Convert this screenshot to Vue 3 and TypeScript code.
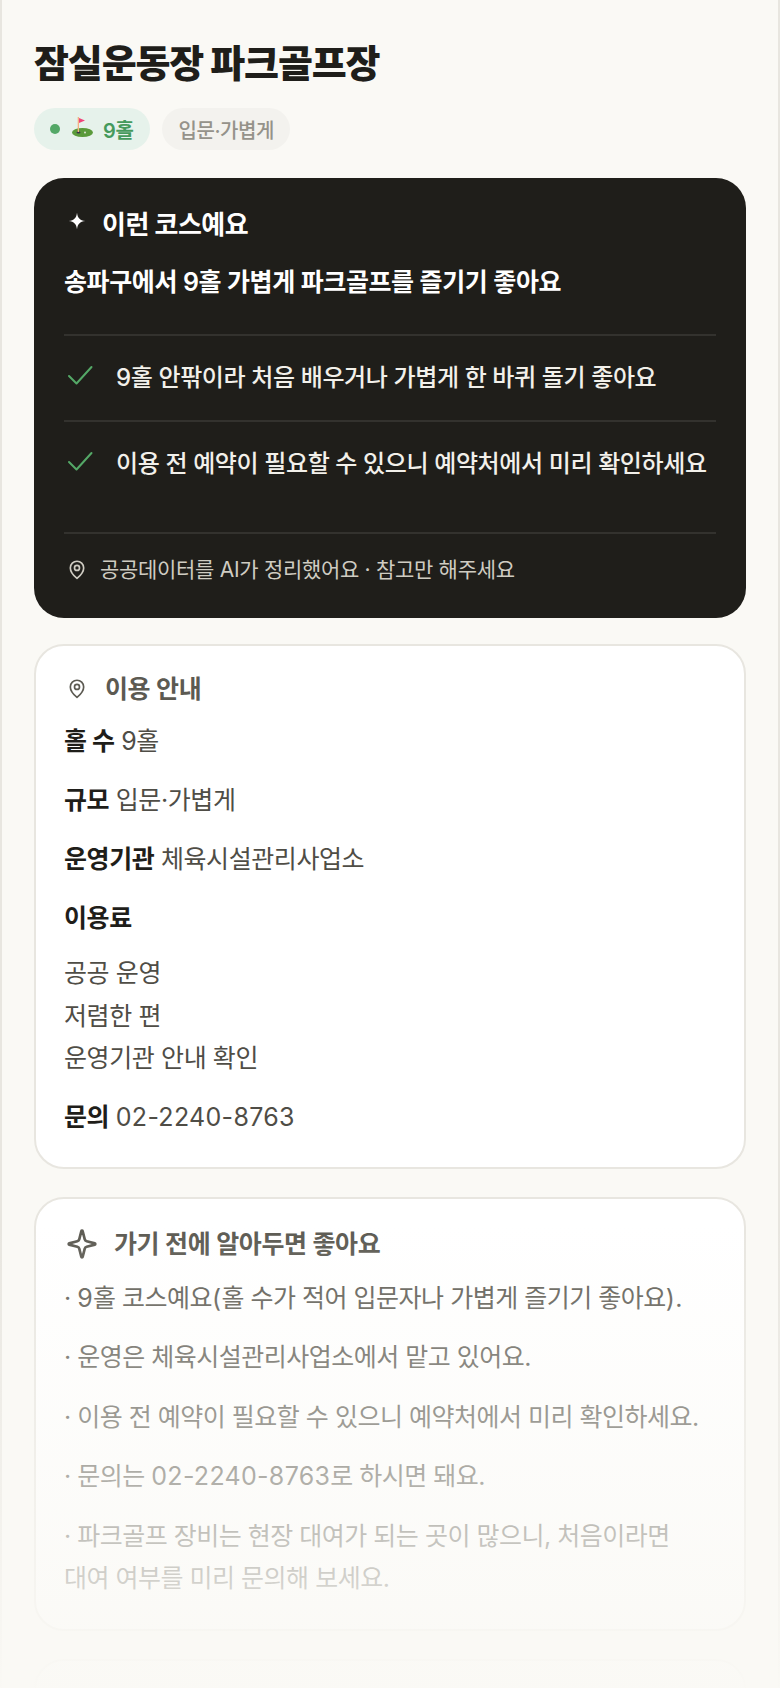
<script setup lang="ts">
const checks: string[] = [
  '9홀 안팎이라 처음 배우거나 가볍게 한 바퀴 돌기 좋아요',
  '이용 전 예약이 필요할 수 있으니 예약처에서 미리 확인하세요',
]

const tips: string[] = [
  '· 9홀 코스예요(홀 수가 적어 입문자나 가볍게 즐기기 좋아요).',
  '· 운영은 체육시설관리사업소에서 맡고 있어요.',
  '· 이용 전 예약이 필요할 수 있으니 예약처에서 미리 확인하세요.',
  '· 문의는 02-2240-8763로 하시면 돼요.',
  '· 파크골프 장비는 현장 대여가 되는 곳이 많으니, 처음이라면 대여 여부를 미리 문의해 보세요.',
]

// digits and punctuation sit a little wider than the hangul around them
const splitNums = (t: string): string[] => t.split(/([0-9().-]+)/)
</script>

<template>
  <div class="page">
    <h1 class="title">잠실운동장 파크골프장</h1>
    <div class="chips">
      <span class="chip chip-green">
        <i class="dot"></i>
        <svg class="golf" viewBox="0 0 24 24">
          <ellipse cx="11.500" cy="15.500" rx="10.500" ry="4.500" fill="#5a9a3a" />
          <ellipse cx="7.500" cy="15.500" rx="2" ry="1" fill="#3a3348" />
          <circle cx="14" cy="15.500" r="0.900" fill="#e8e8e0" />
          <rect x="6.700" y="0" width="1.300" height="15" fill="#f4b183" />
          <path d="M8 1 14 3.500 8 6z" fill="#f0457a" />
        </svg>
        <span>9홀</span>
      </span>
      <span class="chip chip-gray">입문·가볍게</span>
    </div>

    <section class="dark">
      <div class="dark-head">
        <svg class="spark" viewBox="0 0 24 24"><path d="M12 1c.8 7 3.800 10.200 11 11-7.200.8-10.200 4-11 11-.8-7-3.800-10.200-11-11 7.200-.8 10.200-4 11-11z" fill="#fff" /></svg>
        <h2>이런 코스예요</h2>
      </div>
      <p class="lead">송파구에서 9홀 가볍게 파크골프를 즐기기 좋아요</p>
      <ul class="checks">
        <li v-for="c in checks" :key="c">
          <svg class="check" viewBox="0 0 32 32"><path d="M5 17l7.500 7.500L27.500 8" fill="none" stroke="#54a867" stroke-width="2" stroke-linecap="round" stroke-linejoin="round" /></svg>
          <span>{{ c }}</span>
        </li>
      </ul>
      <div class="note">
        <svg class="pin" viewBox="0 0 24 24" fill="none" stroke="currentColor" stroke-width="2"><path d="M12 22s8-6.500 8-12.500a8 8 0 0 0-16 0C4 15.500 12 22 12 22z" stroke-linejoin="round" /><circle cx="12" cy="9.500" r="3" /></svg>
        <span>공공데이터를 AI가 정리했어요 · 참고만 해주세요</span>
      </div>
    </section>

    <section class="card info">
      <div class="card-head">
        <svg class="pin" viewBox="0 0 24 24" fill="none" stroke="currentColor" stroke-width="2"><path d="M12 22s8-6.500 8-12.500a8 8 0 0 0-16 0C4 15.500 12 22 12 22z" stroke-linejoin="round" /><circle cx="12" cy="9.500" r="3" /></svg>
        <h3>이용 안내</h3>
      </div>
      <p class="row first"><b>홀 수</b> 9홀</p>
      <p class="row"><b>규모</b> 입문·가볍게</p>
      <p class="row"><b>운영기관</b> 체육시설관리사업소</p>
      <p class="row"><b>이용료</b></p>
      <p class="fee">공공 운영<br />저렴한 편<br />운영기관 안내 확인</p>
      <p class="row"><b>문의</b> <span class="num">02-2240-8763</span></p>
    </section>

    <section class="card tips">
      <div class="card-head">
        <svg class="star" viewBox="0 0 24 24" fill="none" stroke="currentColor" stroke-width="2" stroke-linecap="round" stroke-linejoin="round"><path d="M9.937 15.500A2 2 0 0 0 8.500 14.063l-6.135-1.582a.5.5 0 0 1 0-.962L8.500 9.936A2 2 0 0 0 9.937 8.500l1.582-6.135a.5.5 0 0 1 .963 0L14.063 8.500A2 2 0 0 0 15.500 9.937l6.135 1.581a.5.5 0 0 1 0 .964L15.500 14.063a2 2 0 0 0-1.437 1.437l-1.582 6.135a.5.5 0 0 1-.963 0z" /></svg>
        <h3>가기 전에 알아두면 좋아요</h3>
      </div>
      <p v-for="t in tips" :key="t" class="tip">
        <span v-for="(part, i) in splitNums(t)" :key="i" :class="{ num: i % 2 === 1 }">{{ part }}</span>
      </p>
    </section>

    <section class="card next"></section>

    <div class="fade"></div>
  </div>
</template>

<style>
body {
  background: #faf9f5;
}
</style>

<style scoped>
.page {
  position: relative;
  box-sizing: border-box;
  height: 1688px;
  overflow: hidden;
  padding: 37px 34px 0;
  background: #faf9f5;
  box-shadow: inset 2px 0 #e8e6e0, inset -2px 0 #e8e6e0;
  font-family: Inter, "Noto Sans CJK KR", sans-serif;
  color: #1f1e1a;
}
.title {
  margin: 0;
  font-size: 38px;
  line-height: 52px;
  font-weight: 800;
  letter-spacing: -1.14px;
}
.chips {
  display: flex;
  gap: 12px;
  margin-top: 19px;
}
.chip {
  display: inline-flex;
  align-items: center;
  height: 42px;
  padding: 0 16px;
  border-radius: 21px;
  font-size: 20px;
  letter-spacing: -0.4px;
  font-weight: 500;
}
.chip-green {
  padding-right: 17px;
  background: #e6f2eb;
  color: #459a5c;
  font-weight: 600;
}
.dot {
  width: 10px;
  height: 10px;
  border-radius: 50%;
  background: #54a867;
  margin-right: 11px;
}
.golf {
  width: 24px;
  height: 24px;
  margin-right: 8px;
}
.chip-gray {
  background: #f3f2ee;
  color: #95928a;
}
.dark {
  margin-top: 28px;
  background: #1f1e1a;
  border-radius: 30px;
  padding: 28px 30px 32px;
  color: #fff;
}
.dark-head {
  display: flex;
  align-items: center;
  gap: 16px;
}
.dark-head h2 {
  margin: 0;
  font-size: 26px;
  line-height: 38px;
  font-weight: 700;
  letter-spacing: -0.5px;
}
.spark {
  width: 18px;
  height: 18px;
  margin-left: 4px;
  margin-top: -8px;
}
.lead {
  margin: 20px 0 0;
  font-size: 25px;
  line-height: 36px;
  font-weight: 600;
  letter-spacing: -0.4px;
}
.checks {
  list-style: none;
  margin: 34px 0 0;
  padding: 0;
}
.checks li {
  display: flex;
  align-items: center;
  gap: 20px;
  height: 86px;
  border-top: 2px solid #33322e;
  box-sizing: border-box;
  padding-bottom: 6px;
  font-size: 24px;
  font-weight: 500;
  letter-spacing: -0.38px;
  color: #f2f0ea;
}
.check {
  width: 32px;
  height: 32px;
  flex: none;
}
.note {
  display: flex;
  align-items: center;
  gap: 13px;
  margin-top: 26px;
  border-top: 2px solid #33322e;
  padding-top: 20px;
  font-size: 21px;
  line-height: 32px;
  letter-spacing: -0.3px;
  color: #cfccc2;
}
.pin {
  width: 20px;
  height: 20px;
  margin-left: 3px;
  flex: none;
}
.card {
  margin-top: 28px;
  background: #fff;
  border: 2px solid #e8e6e0;
  border-radius: 30px;
  padding: 24px 28px 29px;
}
.info {
  margin-top: 26px;
  padding-top: 25px;
}
.card-head {
  display: flex;
  align-items: center;
  gap: 18px;
  color: #5c5a52;
}
.card-head h3 {
  margin: 0;
  font-size: 25px;
  line-height: 36px;
  font-weight: 600;
  letter-spacing: -0.4px;
}
.row {
  margin: 17px 0 0;
  font-size: 25px;
  line-height: 42px;
  letter-spacing: -0.42px;
  color: #4f4d46;
}
.row.first {
  margin-top: 13px;
}
.row b {
  color: #1f1e1a;
  font-weight: 700;
}
.num {
  letter-spacing: 0.3px;
}
.fee {
  margin: 13px 0 0;
  font-size: 25px;
  line-height: 42.500px;
  letter-spacing: -0.4px;
  color: #4f4d46;
}
.fee + .row {
  margin-top: 16px;
}
.tips .card-head {
  gap: 16px;
  height: 42px;
}
.tip {
  margin: 17px 0 0;
  font-size: 25px;
  line-height: 42.500px;
  letter-spacing: -0.5px;
  word-break: keep-all;
  color: #5c5a52;
}
.tips .tip:first-of-type {
  margin-top: 12px;
}
.star {
  width: 32px;
  height: 32px;
  margin-left: 2px;
  flex: none;
}
.next {
  height: 120px;
}
.fade {
  position: absolute;
  left: 0;
  right: 0;
  bottom: -12px;
  height: 475px;
  background: linear-gradient(to bottom, rgba(250, 249, 245, 0), #faf9f5);
  pointer-events: none;
}
</style>
